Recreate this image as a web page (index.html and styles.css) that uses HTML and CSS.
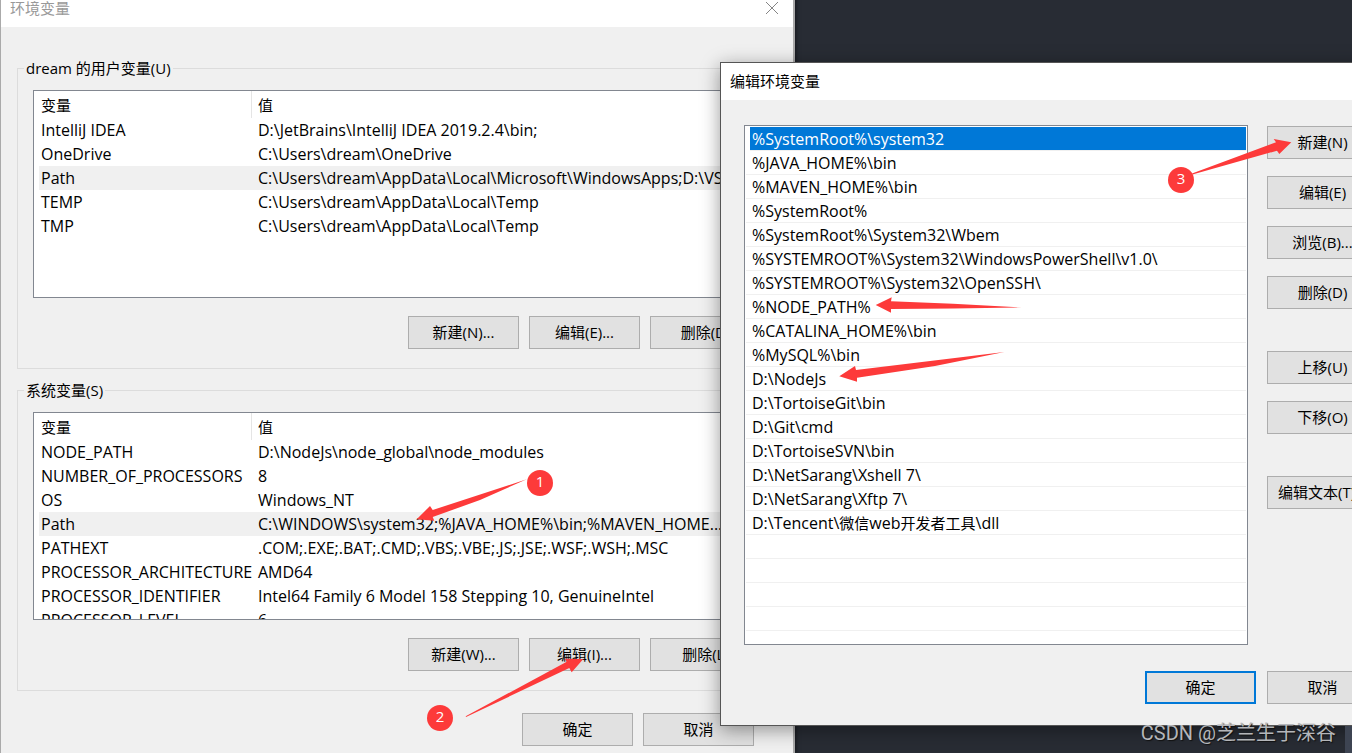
FILE: index.html
```html
<!DOCTYPE html>
<html lang="zh-CN">
<head>
<meta charset="utf-8">
<title>环境变量</title>
<link rel="stylesheet" href="styles.css">
</head>
<body>
<main class="desktop">
  <section class="window window-vars" aria-label="环境变量">
    <header class="titlebar titlebar-inactive">
      <span>环境变量</span>
      <button class="close" type="button" aria-label="关闭">
        <svg viewBox="0 0 14 14" width="14" height="14"><path d="M1 1 13 13M13 1 1 13" fill="none" stroke="#858585"/></svg>
      </button>
    </header>
    <div class="vars-body">
      <fieldset class="group">
        <legend>dream 的用户变量(U)</legend>
        <div class="table-box">
          <table class="vars">
            <thead><tr><th class="name">变量</th><th>值</th></tr></thead>
            <tbody>
              <tr><td>IntelliJ IDEA</td><td>D:\JetBrains\IntelliJ IDEA 2019.2.4\bin;</td></tr>
              <tr><td>OneDrive</td><td>C:\Users\dream\OneDrive</td></tr>
              <tr class="current"><td>Path</td><td>C:\Users\dream\AppData\Local\Microsoft\WindowsApps;D:\VS...</td></tr>
              <tr><td>TEMP</td><td>C:\Users\dream\AppData\Local\Temp</td></tr>
              <tr><td>TMP</td><td>C:\Users\dream\AppData\Local\Temp</td></tr>
            </tbody>
          </table>
        </div>
        <div class="actions">
          <button class="btn" type="button">新建(N)...</button>
          <button class="btn" type="button">编辑(E)...</button>
          <button class="btn" type="button">删除(D)</button>
        </div>
      </fieldset>
      <fieldset class="group">
        <legend>系统变量(S)</legend>
        <div class="table-box">
          <table class="vars">
            <thead><tr><th class="name">变量</th><th>值</th></tr></thead>
            <tbody>
              <tr><td>NODE_PATH</td><td>D:\NodeJs\node_global\node_modules</td></tr>
              <tr><td>NUMBER_OF_PROCESSORS</td><td>8</td></tr>
              <tr><td>OS</td><td>Windows_NT</td></tr>
              <tr class="current"><td>Path</td><td>C:\WINDOWS\system32;%JAVA_HOME%\bin;%MAVEN_HOME...</td></tr>
              <tr><td>PATHEXT</td><td>.COM;.EXE;.BAT;.CMD;.VBS;.VBE;.JS;.JSE;.WSF;.WSH;.MSC</td></tr>
              <tr><td>PROCESSOR_ARCHITECTURE</td><td>AMD64</td></tr>
              <tr><td>PROCESSOR_IDENTIFIER</td><td>Intel64 Family 6 Model 158 Stepping 10, GenuineIntel</td></tr>
              <tr><td>PROCESSOR_LEVEL</td><td>6</td></tr>
            </tbody>
          </table>
        </div>
        <div class="actions">
          <button class="btn" type="button">新建(W)...</button>
          <button class="btn" type="button">编辑(I)...</button>
          <button class="btn" type="button">删除(L)</button>
        </div>
      </fieldset>
      <footer class="vars-footer">
        <button class="btn" type="button">确定</button>
        <button class="btn" type="button">取消</button>
      </footer>
    </div>
  </section>

  <section class="window window-edit" aria-label="编辑环境变量">
    <header class="titlebar"><span>编辑环境变量</span></header>
    <div class="edit-body">
      <ul class="paths" role="listbox" aria-label="路径">
        <li class="selected" role="option" aria-selected="true">%SystemRoot%\system32</li>
        <li role="option">%JAVA_HOME%\bin</li>
        <li role="option">%MAVEN_HOME%\bin</li>
        <li role="option">%SystemRoot%</li>
        <li role="option">%SystemRoot%\System32\Wbem</li>
        <li role="option">%SYSTEMROOT%\System32\WindowsPowerShell\v1.0\</li>
        <li role="option">%SYSTEMROOT%\System32\OpenSSH\</li>
        <li role="option">%NODE_PATH%</li>
        <li role="option">%CATALINA_HOME%\bin</li>
        <li role="option">%MySQL%\bin</li>
        <li role="option">D:\NodeJs</li>
        <li role="option">D:\TortoiseGit\bin</li>
        <li role="option">D:\Git\cmd</li>
        <li role="option">D:\TortoiseSVN\bin</li>
        <li role="option">D:\NetSarang\Xshell 7\</li>
        <li role="option">D:\NetSarang\Xftp 7\</li>
        <li role="option">D:\Tencent\<span class="han">微信</span>web<span class="han">开发者工具</span>\dll</li>
        <li role="presentation"></li>
        <li role="presentation"></li>
        <li role="presentation"></li>
        <li role="presentation"></li>
      </ul>
      <div class="side">
        <button class="btn" type="button">新建(N)</button>
        <button class="btn" type="button">编辑(E)</button>
        <button class="btn" type="button">浏览(B)...</button>
        <button class="btn" type="button">删除(D)</button>
        <button class="btn spaced" type="button">上移(U)</button>
        <button class="btn" type="button">下移(O)</button>
        <button class="btn spaced" type="button">编辑文本(T)...</button>
      </div>
    </div>
    <footer class="edit-footer">
      <button class="btn btn-default" type="button">确定</button>
      <button class="btn" type="button">取消</button>
    </footer>
  </section>

  <svg class="arrows" width="1352" height="753" viewBox="0 0 1352 753" fill="#fd3a3a" aria-hidden="true">
    <path d="M416.7 519.3 430 506 432.7 510 526.7 479.3 480 500 432.7 517 434.3 520.7Z"/>
    <path d="M583.3 659 565 658.7 566.7 661.7 465.7 716.3 466 717 569.3 668 571.7 672.3Z"/>
    <path d="M1291.3 142.3 1273.7 139 1276 142.3 1192 173.5 1192.5 174.5 1277 150.7 1279.3 154Z"/>
    <path d="M875.7 305 891.7 297.3 891 301.3 953 303.7 1021.7 307.5 953 308.5 891 309 891 312.7Z"/>
    <path d="M839.3 376.3 855 366 856 370 1004.3 352 935 366 857 377.7 857 381.7Z"/>
  </svg>
  <span class="step step-1">1</span>
  <span class="step step-2">2</span>
  <span class="step step-3">3</span>
  <p class="watermark">CSDN @芝兰生于深谷</p>
  <span class="corner"></span>
</main>
</body>
</html>
```
FILE: styles.css
```css
* { box-sizing: border-box; }

body {
  margin: 0;
  font: 15px/22px "Open Sans", "Noto Sans CJK SC", sans-serif;
  color: #000;
}

.desktop {
  position: relative;
  height: 100vh;
  overflow: hidden;
  background: #282c34;
}

/* Windows */
.window {
  position: absolute;
  background: #f0f0f0;
}

.window-vars {
  left: 0;
  top: -10px;
  bottom: 0;
  width: 795px;
  border: solid #aaa;
  border-width: 0 2px 0 1px;
  box-shadow: 0 0 4px 1px #15171b;
}

.window-edit {
  left: 720px;
  top: 62px;
  width: 682px;
  border: 1px solid #555;
  box-shadow: 0 4px 18px rgba(0, 0, 0, .4);
}

.titlebar {
  display: flex;
  align-items: center;
  justify-content: space-between;
  height: 37px;
  padding: 0 14px 2px 9px;
  background: #fff;
}

.titlebar-inactive { color: #999; }

.close {
  display: flex;
  padding: 0;
  border: 0;
  background: none;
}

/* Buttons */
.btn {
  width: 111px;
  height: 33px;
  padding: 0 0 2px;
  border: 1px solid #adadad;
  background: #e1e1e1;
  color: #000;
  font: inherit;
  white-space: nowrap;
}

.btn-default { border: 2px solid #0078d7; }

/* Variable lists */
.vars-body {
  display: flex;
  flex-direction: column;
  gap: 10px;
  padding: 30px 16px 0;
}

.group {
  min-width: 0;
  margin: 0;
  padding: 11px 15px 19px;
  border: 1px solid #dcdcdc;
}

.group legend {
  margin-left: -9px;
  padding: 0 2px;
}

.table-box {
  height: 208px;
  padding: 0 5px;
  overflow: hidden;
  border: 1px solid #828790;
  background: #fff;
}

.vars {
  width: 100%;
  table-layout: fixed;
  border-spacing: 0;
}

.vars th,
.vars td {
  height: 24px;
  padding: 0 0 0 2px;
  font-weight: 400;
  text-align: left;
  white-space: nowrap;
}

.vars td { font-size: 16px; }
.vars th { height: 27px; }
.vars .name { width: 213px; border-right: 1px solid #e5e5e5; }
.vars th + th,
.vars td + td { padding-left: 6px; }
.vars .current { background: #f0f0f0; }

.actions,
.vars-footer,
.edit-footer {
  display: flex;
  justify-content: flex-end;
  gap: 10px;
}

.actions { margin-top: 18px; }
.vars-footer { padding: 12px 23px 0; }

/* Path editor */
.edit-body {
  display: flex;
  gap: 19px;
  padding: 25px 23px 0;
}

.paths {
  flex: 1;
  height: 520px;
  margin: 0;
  padding: 1px 1px 0;
  overflow: hidden;
  list-style: none;
  border: 1px solid #828790;
  background: #fff;
  font-size: 16px;
  line-height: 24px;
}

.paths li {
  height: 24px;
  padding-left: 6px;
  border-bottom: 1px solid #f0f0f0;
}

.paths .selected {
  margin-left: 4px;
  padding-left: 2px;
  background: #0078d7;
  color: #fff;
}

.han { font-size: 15px; }

.side {
  display: flex;
  flex-direction: column;
  gap: 17px;
  padding-top: 1px;
}

.spaced { margin-top: 25px; }

.edit-footer {
  gap: 11px;
  padding: 26px 23px 21px;
}

/* Annotations */
.arrows {
  position: absolute;
  left: 0;
  top: 0;
}

.step {
  position: absolute;
  width: 26px;
  height: 26px;
  border-radius: 50%;
  background: #fd3a3a;
  color: #fff;
  text-align: center;
}

.step-1 { left: 527px; top: 470px; }
.step-2 { left: 427px; top: 705px; }
.step-3 { left: 1168px; top: 167px; }

.watermark {
  position: absolute;
  right: 16px;
  bottom: 6px;
  margin: 0;
  color: #b4b6ba;
  font: 20px/28px Roboto, "Noto Sans CJK SC", sans-serif;
  text-shadow: 1px 1px 1px #111;
}

.corner {
  position: absolute;
  right: 0;
  bottom: 0;
  width: 7px;
  height: 27px;
  background: #3d4452;
}
```
